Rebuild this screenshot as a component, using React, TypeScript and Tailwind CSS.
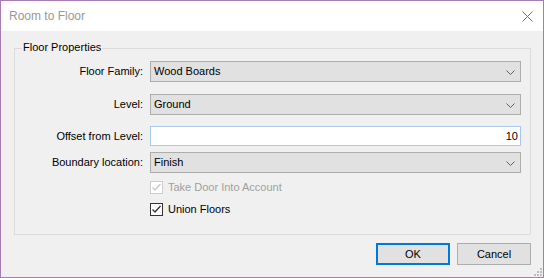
import { type FC } from 'react';

const Chevron: FC = () => (
    <svg width="9" height="5" viewBox="0 0 9 5" className="absolute right-[5px] top-[8px]">
        <path d="M0.5 0.5 L4.5 4.5 L8.5 0.5" fill="none" stroke="#606060" strokeWidth="1" />
    </svg>
);

const Combo: FC<{ value: string }> = ({ value }) => (
    <div className="relative h-[21px] w-[371px] border border-[#adadad] bg-[#e1e1e1] pl-[3px] text-[11px] leading-[19px] text-black">
        {value}
        <Chevron />
    </div>
);

const Check: FC<{ label: string; disabled?: boolean }> = ({ label, disabled }) => {
    const stroke = disabled ? '#c6c6c6' : '#333333';
    return (
        <div className="flex h-[13px] items-center gap-[5px]">
            <svg width="13" height="13" viewBox="0 0 13 13">
                <rect x="0.5" y="0.5" width="12" height="12" fill="#ffffff" stroke={disabled ? '#cccccc' : '#333333'} />
                <path d="M2.5 6.5 L5 9 L10.5 3" fill="none" stroke={stroke} strokeWidth="1.3" />
            </svg>
            <span className={disabled ? 'text-[11px] text-[#a0a0a0]' : 'text-[11px] text-black'}>{label}</span>
        </div>
    );
};

const App: FC = () => {
    return (
        <div className="relative flex h-[278px] w-[544px] flex-col border border-[#a97ab6] bg-[#f0f0f0] font-['Liberation_Sans',Arial,sans-serif]">
            {/* title bar */}
            <div className="flex h-[30px] items-center justify-between bg-white pl-[8px] pr-[10px]">
                <span className="text-[12px] text-[#999999]">Room to Floor</span>
                <svg width="11" height="11" viewBox="0 0 11 11">
                    <path d="M0.5 0.5 L10.5 10.5 M10.5 0.5 L0.5 10.5" stroke="#707070" strokeWidth="1" />
                </svg>
            </div>

            <div className="flex flex-col pl-[13px] pt-[17px]">
                {/* group box */}
                <div className="relative h-[187px] w-[517px] border border-[#dcdcdc]">
                    <span className="absolute left-[7px] top-[-8px] bg-[#f0f0f0] px-px text-[11px] leading-[13px] text-black">
                        Floor Properties
                    </span>

                    <div className="grid grid-cols-[128px_371px] items-center gap-x-[7px] pt-[12px]">
                        <span className="text-right text-[11px] text-black">Floor Family:</span>
                        <Combo value="Wood Boards" />

                        <span className="mt-[12px] text-right text-[11px] text-black">Level:</span>
                        <div className="mt-[12px]">
                            <Combo value="Ground" />
                        </div>

                        <span className="mt-[11px] text-right text-[11px] text-black">Offset from Level:</span>
                        <div className="mt-[11px] h-[20px] w-[371px] border border-[#a9c8ea] bg-white pr-[2px] text-right text-[11px] leading-[18px] text-black">
                            10
                        </div>

                        <span className="mt-[6px] text-right text-[11px] text-black">Boundary location:</span>
                        <div className="mt-[6px]">
                            <Combo value="Finish" />
                        </div>

                        <span />
                        <div className="mt-[8px]">
                            <Check label="Take Door Into Account" disabled />
                        </div>

                        <span />
                        <div className="mt-[9px]">
                            <Check label="Union Floors" />
                        </div>
                    </div>
                </div>

                {/* buttons */}
                <div className="mt-[8px] flex w-[517px] justify-end gap-[7px]">
                    <button className="h-[22px] w-[74px] border-2 border-[#0078d7] bg-[#e1e1e1] text-[11px] text-black">
                        OK
                    </button>
                    <button className="h-[22px] w-[74px] border border-[#adadad] bg-[#e1e1e1] text-[11px] text-black">
                        Cancel
                    </button>
                </div>
            </div>

            {/* resize grip */}
            <svg width="8" height="8" viewBox="0 0 8 8" className="absolute bottom-[1px] right-[1px]">
                <rect x="6" y="0" width="2" height="2" fill="#bdbdbd" />
                <rect x="3" y="3" width="2" height="2" fill="#bdbdbd" />
                <rect x="6" y="3" width="2" height="2" fill="#bdbdbd" />
                <rect x="0" y="6" width="2" height="2" fill="#bdbdbd" />
                <rect x="3" y="6" width="2" height="2" fill="#bdbdbd" />
                <rect x="6" y="6" width="2" height="2" fill="#bdbdbd" />
            </svg>
        </div>
    );
};

export default App;
